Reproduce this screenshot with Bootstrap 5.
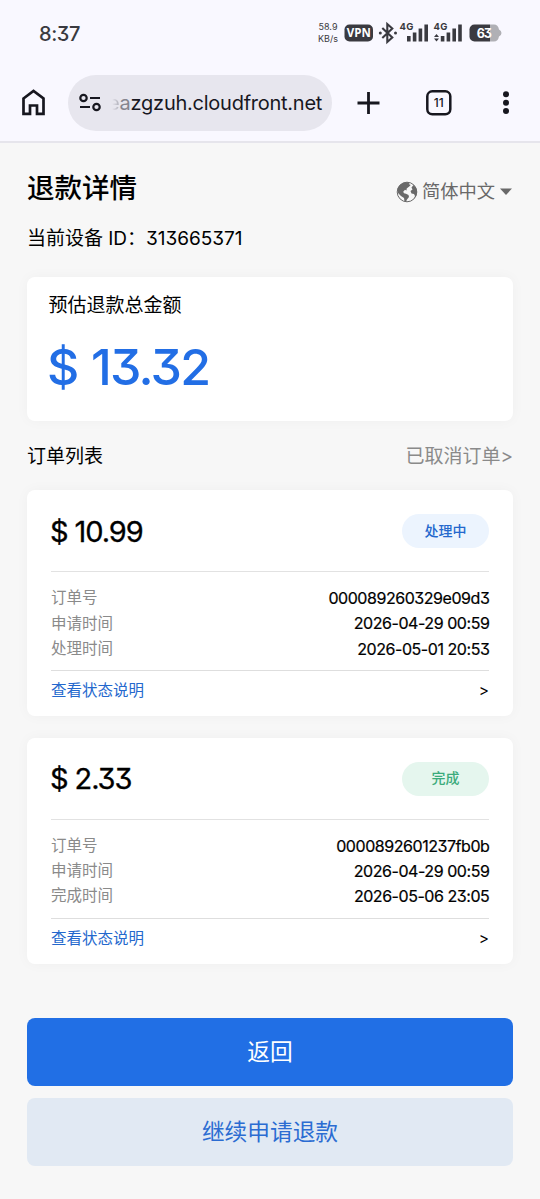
<!DOCTYPE html>
<html lang="zh-CN">
<head>
<meta charset="utf-8">
<meta name="viewport" content="width=device-width, initial-scale=1">
<title>退款详情</title>
<link href="https://cdn.jsdelivr.net/npm/bootstrap@5.3.0/dist/css/bootstrap.min.css" rel="stylesheet">
<style>
body{font-family:Inter,"Noto Sans CJK SC",sans-serif;font-feature-settings:"cv09";background:#f7f7f7;color:#000;line-height:1.2}
.chrome{background:#f9f8ff;height:143px;border-bottom:2px solid #e6e5ec;color:#17171f}
.status{height:66px;padding:0 38px 0 39px;color:#3a3a40}
.clock{font-size:20px;font-weight:500;letter-spacing:-.4px;padding-top:1px}
.speed{font-size:9px;line-height:12px;text-align:center;width:24px}
.toolbar{height:73px;padding:0 20px}
.url{width:264px;height:56px;background:#e7e6ee;margin-left:20px;padding-left:11px;font-size:20px}
.url-text{margin-left:7px;white-space:nowrap;letter-spacing:-.25px}
.fade1{background:linear-gradient(90deg,#e7e6ee 35%,#a8a8b2);-webkit-background-clip:text;background-clip:text;color:transparent}
.fade2{color:#85858e}
.page{padding:0 27px}
.title-row{height:90px}
h1{font-size:27.5px;font-weight:500;margin:0}
.lang{font-size:18.3px;color:#696969;padding-top:8px}
.device{font-size:19px;height:24px;line-height:24px;margin-top:-6px;white-space:pre;letter-spacing:-.02px}
.panel{background:#fff;border:0;border-radius:8px;box-shadow:0 0 14px rgba(0,0,0,.035)}
.total{height:144px;margin-top:26px;padding:17px 22px}
.total-label{font-size:19px;line-height:24px;margin-left:-.5px}
.total-sum{font-size:50px;font-weight:500;line-height:60px;color:#226ee5;margin-top:19px;margin-left:-2px;letter-spacing:-1.8px;word-spacing:2px}
.list-head{height:69px;font-size:19px;padding-top:3px}
.muted{color:#8a8a8a}
.order{height:226px;padding:0 24px;margin-bottom:21.5px}
.order-head{height:82px;border-bottom:1px solid #e2e2e2}
.sum{font-size:29px;font-weight:400;letter-spacing:-1.1px;padding-top:3px;margin-left:-1px;-webkit-text-stroke:.3px #000}
.pill{width:87px;height:34px;font-size:14px;font-weight:500;margin-top:1px}
.busy{background:#ecf4fe;color:#2468cd}
.done{background:#e5f6ee;color:#3bab7c}
.facts{height:99px;padding-top:14px;border-bottom:1px solid #dedede}
.fact{height:25.3px;font-size:15.5px}
.fact .val{font-size:16px;font-weight:400;letter-spacing:-.45px;margin-right:-.4px;-webkit-text-stroke:.2px #000}
.more{height:41px;font-size:15.5px;color:#2468cd}
.act{height:68px;border-radius:8px;font-size:22.7px;border:0;width:100%;display:block;padding:2px 0 0}
.act + .act{margin-top:12px}
.actions{padding-top:32.500px}
.act-main,.act-main:hover{background:#216fe5;color:#fff}
.act-sub,.act-sub:hover{background:#e1e9f3;color:#2b6cd2}
</style>
</head>
<body>
<header class="chrome">
  <div class="status d-flex align-items-center justify-content-between">
    <span class="clock">8:37</span>
    <div class="d-flex align-items-center">
      <span class="speed">58.9<br>KB/s</span>
      <svg width="162" height="30" viewBox="340 18 162 30" fill="#3a3a40" font-family="Inter,sans-serif" font-weight="700">
        <rect x="344.500" y="24.500" width="28.500" height="17" rx="5"/>
        <text x="358.800" y="37.300" fill="#fff" font-size="11.500" font-family="Open Sans,sans-serif" text-anchor="middle" textLength="24">VPN</text>
        <path d="M382.300 28l10 9.500-5 4.500V24l5 4.500-10 9.500" fill="none" stroke="#3a3a40" stroke-width="2.100"/>
        <circle cx="380.300" cy="33" r="1.500"/><circle cx="395.500" cy="33" r="1.500"/>
        <text x="399.500" y="29.500" font-size="9.500" textLength="14">4G</text>
        <path d="M407 36h3.600v5.500H407zM412.800 32.500h3.600v9h-3.600zM418.600 28.500h3.600v13h-3.600zM424.400 24.500h3.600v17h-3.600z"/>
        <text x="433.500" y="29.500" font-size="9.500" textLength="14">4G</text>
        <path d="M434 37l2.500-3 2.500 3zM434 38.500l2.500 3 2.500-3zM440.800 36h3.600v5.500h-3.600zM446.600 32.500h3.600v9h-3.600zM452.400 28.500h3.600v13h-3.600zM458.200 24.500h3.600v17h-3.600z"/>
        <path d="M474.500 24.500H490v17h-15.500a5 5 0 0 1-5-5v-7a5 5 0 0 1 5-5z"/>
        <path d="M490 24.500h4q4 0 5 5 2.500 1 2.500 3.500T499 36.500q-1 5-5 5h-4z" fill="#b0b0b5"/>
        <text x="484.300" y="37.600" fill="#fff" font-size="12.500" text-anchor="middle" textLength="15">63</text>
      </svg>
    </div>
  </div>
  <div class="toolbar d-flex align-items-center">
    <svg width="28" height="28" viewBox="20 89 28 28" fill="none" stroke="#17171f" stroke-width="2.700"><path d="M23.500 98.500L33.500 91l10 7.500v15.300H37v-8.300h-7v8.300h-6.500z"/></svg>
    <div class="url rounded-pill d-flex align-items-center">
      <svg width="22" height="22" viewBox="79 92 22 22" fill="none" stroke="#17171f" stroke-width="2.200"><circle cx="83.500" cy="98" r="3.200"/><path d="M90 98h10M80 107h10"/><circle cx="96.500" cy="107" r="3.200"/></svg>
      <span class="url-text"><span class="fade1">e</span><span class="fade2">a</span>zgzuh.cloudfront.net</span>
    </div>
    <svg width="188" height="34" viewBox="332 86 188 34">
      <path d="M357.500 103h22M368.500 92v22" stroke="#17171f" stroke-width="2.800"/>
      <rect x="427.300" y="91.300" width="23" height="23" rx="5" fill="none" stroke="#17171f" stroke-width="2.500"/>
      <text x="438.800" y="107.300" font-family="Inter,sans-serif" font-size="12" font-weight="500" text-anchor="middle" fill="#17171f">11</text>
      <g fill="#17171f"><circle cx="506" cy="94.300" r="3"/><circle cx="506" cy="102.700" r="3"/><circle cx="506" cy="111" r="3"/></g>
    </svg>
  </div>
</header>
<main class="page">
  <div class="title-row d-flex align-items-center justify-content-between">
    <h1>退款详情</h1>
    <div class="lang d-flex align-items-center">
      <svg width="22" height="22" viewBox="0 0 22 22"><circle cx="11" cy="11" r="9.800" fill="none" stroke="#696969"/><path fill="#696969" d="M11.500 1.200C7 .8 2.500 4 1.500 8l.5 4 3 3 3 2 .5 3.500 1.500.2 1-2.200 2-2.500-.5-2-2.500-1.200-2-.5-.8-1.500 1.800-2 1.500.7.2-2 2.500-2 1.500-1.500-2-1 1-1zM17.500 4l-2 2.500 1 2-2 1.500 1 2.500 2.500.5 1 2-1 2.500q2.500-2 3-5.500V9q-.8-3-3.500-5z"/></svg>
      <span class="ms-1">简体中文</span>
      <svg class="ms-1" width="14" height="8"><path d="M1 .5h12L7 7z" fill="#696969"/></svg>
    </div>
  </div>
  <div class="device">当前设备 ID：313665371</div>
  <section class="card panel total">
    <div class="total-label">预估退款总金额</div>
    <div class="total-sum">$ 13.32</div>
  </section>
  <div class="list-head d-flex align-items-center justify-content-between">
    <span>订单列表</span><span class="muted">已取消订单&gt;</span>
  </div>
  <article class="card panel order">
    <div class="order-head d-flex align-items-center justify-content-between"><span class="sum">$ 10.99</span><span class="pill busy rounded-pill d-flex align-items-center justify-content-center">处理中</span></div>
    <div class="facts">
      <div class="fact d-flex align-items-center justify-content-between"><span class="muted">订单号</span><span class="val">000089260329e09d3</span></div>
      <div class="fact d-flex align-items-center justify-content-between"><span class="muted">申请时间</span><span class="val">2026-04-29 00:59</span></div>
      <div class="fact d-flex align-items-center justify-content-between"><span class="muted">处理时间</span><span class="val">2026-05-01 20:53</span></div>
    </div>
    <div class="more d-flex align-items-center justify-content-between"><span>查看状态说明</span><span class="text-black">&gt;</span></div>
  </article>
  <article class="card panel order">
    <div class="order-head d-flex align-items-center justify-content-between"><span class="sum">$ 2.33</span><span class="pill done rounded-pill d-flex align-items-center justify-content-center">完成</span></div>
    <div class="facts">
      <div class="fact d-flex align-items-center justify-content-between"><span class="muted">订单号</span><span class="val">0000892601237fb0b</span></div>
      <div class="fact d-flex align-items-center justify-content-between"><span class="muted">申请时间</span><span class="val">2026-04-29 00:59</span></div>
      <div class="fact d-flex align-items-center justify-content-between"><span class="muted">完成时间</span><span class="val">2026-05-06 23:05</span></div>
    </div>
    <div class="more d-flex align-items-center justify-content-between"><span>查看状态说明</span><span class="text-black">&gt;</span></div>
  </article>
  <div class="actions">
    <button class="btn act act-main">返回</button>
    <button class="btn act act-sub">继续申请退款</button>
  </div>
</main>
<script src="https://cdn.jsdelivr.net/npm/bootstrap@5.3.0/dist/js/bootstrap.bundle.min.js"></script>
</body>
</html>
